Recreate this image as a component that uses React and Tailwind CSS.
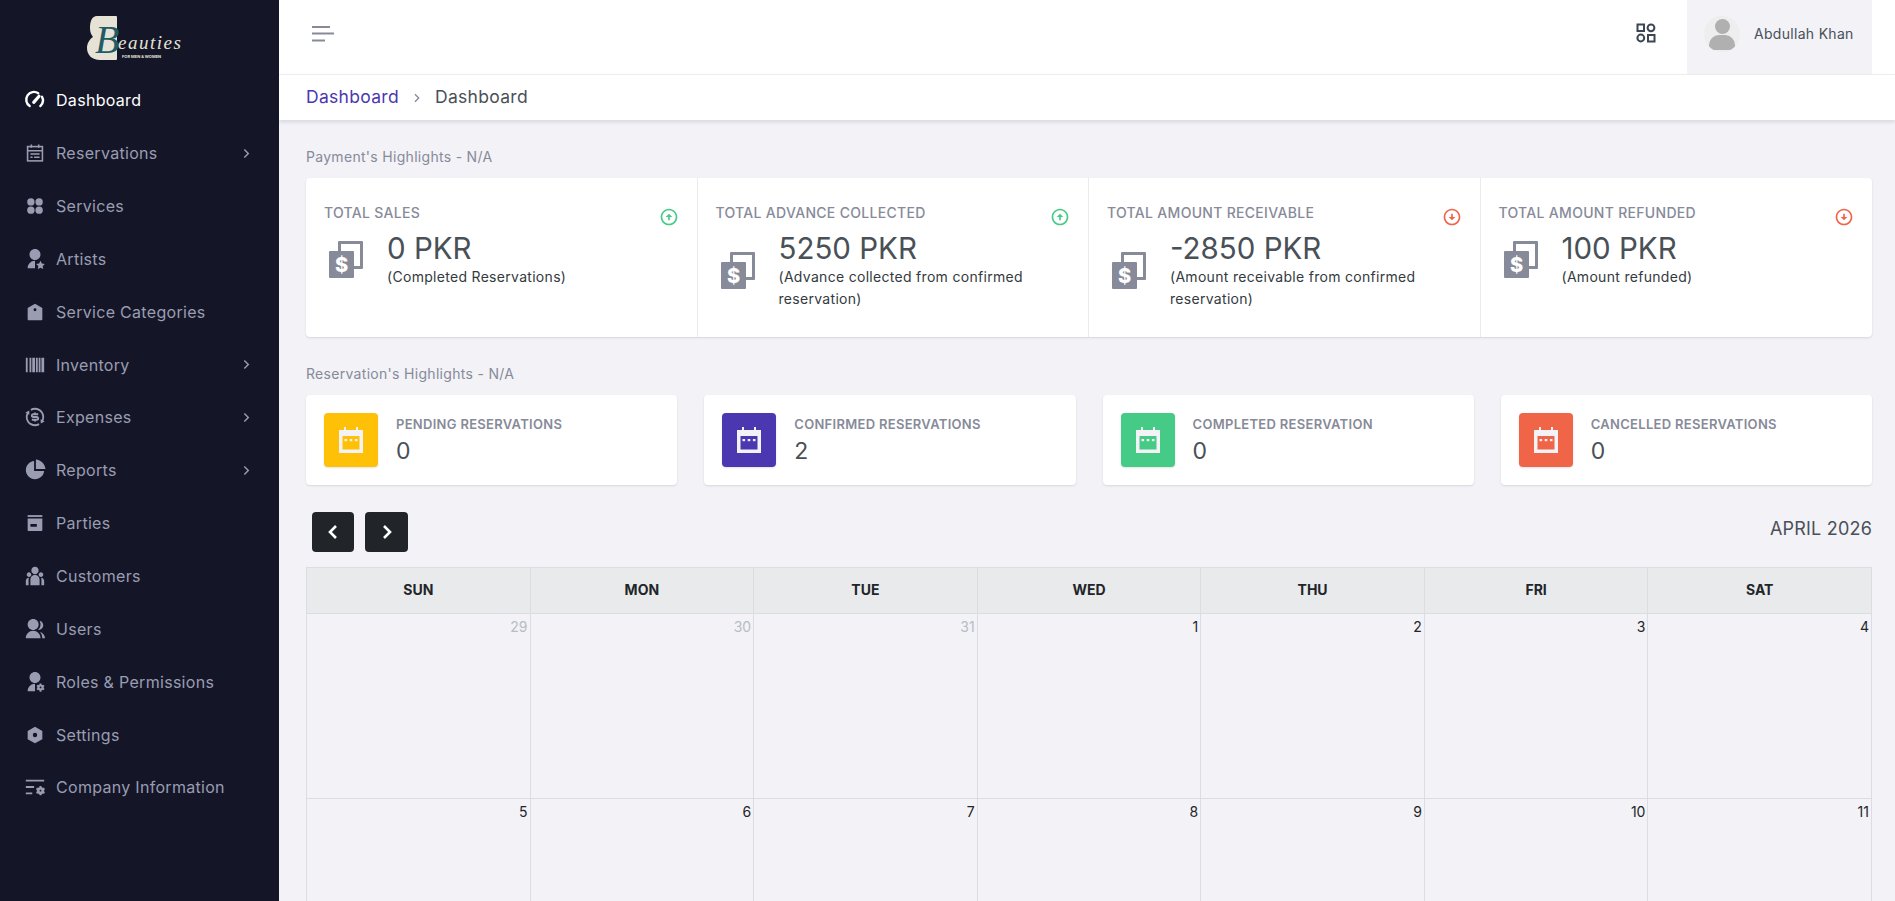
import {
    RiArrowDownCircleLine,
    RiArrowRightSLine,
    RiArrowUpCircleLine,
    RiBarcodeFill,
    RiExchangeDollarLine,
    RiGroupFill,
    RiListSettingsFill,
    RiPieChart2Fill,
    RiTeamFill,
    RiUserSettingsFill,
    RiUserStarFill,
} from 'react-icons/ri';

const FourDots = ({ className }) => (
    <svg viewBox="0 0 24 24" className={className} fill="currentColor">
        <circle cx="7.5" cy="7.5" r="4" />
        <circle cx="16.5" cy="7.5" r="4" />
        <circle cx="7.5" cy="16.5" r="4" />
        <circle cx="16.5" cy="16.5" r="4" />
    </svg>
);

const Gauge = ({ className }) => (
    <svg viewBox="0 0 24 24" className={className} fill="none" stroke="currentColor">
        <path d="M6.2 18.6 A8.4 8.4 0 0 1 15.5 4.6" strokeWidth="2.6" strokeLinecap="round" />
        <path d="M19.6 8.5 A8.4 8.4 0 0 1 17.8 18.6" strokeWidth="2.6" strokeLinecap="round" />
        <path d="M10.6 14.6 L16.4 7.8" strokeWidth="3.4" strokeLinecap="round" />
    </svg>
);

const CalendarLines = ({ className }) => (
    <svg viewBox="0 0 24 24" className={className} fill="none" stroke="currentColor" strokeWidth="1.7">
        <rect x="3.9" y="5" width="16.2" height="15.6" />
        <path d="M4 9.6h16M8 2.8v3.6M16 2.8v3.6" />
        <path d="M7 13h10M7 16.6h2.4M11 16.6h6" />
    </svg>
);

const Tag = ({ className }) => (
    <svg viewBox="0 0 24 24" className={className} fill="currentColor">
        <path fillRule="evenodd" d="M12 3 L20 7.6 V20 a1 1 0 0 1-1 1 H5 a1 1 0 0 1-1-1 V7.6 Z M12 8 a1.6 1.6 0 1 0 0 3.2 a1.6 1.6 0 0 0 0-3.2z" />
    </svg>
);

const Archive = ({ className }) => (
    <svg viewBox="0 0 24 24" className={className} fill="currentColor">
        <rect x="4" y="3.4" width="16" height="2" />
        <path fillRule="evenodd" d="M4 7 H20 V9.6 L20 20 a.8.8 0 0 1-.8.8 H4.8 a.8.8 0 0 1-.8-.8 Z M7 13 v3 h7 v-3 Z" />
    </svg>
);

const Hexagon = ({ className }) => (
    <svg viewBox="0 0 24 24" className={className} fill="currentColor">
        <path fillRule="evenodd" d="M12 3 L20 7.5 V16.5 L12 21 L4 16.5 V7.5 Z M12 9.6 a2.4 2.4 0 1 0 0 4.8 a2.4 2.4 0 0 0 0-4.8z" />
    </svg>
);

const NAV = [
    { label: 'Dashboard', icon: Gauge, active: true },
    { label: 'Reservations', icon: CalendarLines, sub: true },
    { label: 'Services', icon: FourDots },
    { label: 'Artists', icon: RiUserStarFill },
    { label: 'Service Categories', icon: Tag },
    { label: 'Inventory', icon: RiBarcodeFill, sub: true },
    { label: 'Expenses', icon: RiExchangeDollarLine, sub: true },
    { label: 'Reports', icon: RiPieChart2Fill, sub: true },
    { label: 'Parties', icon: Archive },
    { label: 'Customers', icon: RiTeamFill },
    { label: 'Users', icon: RiGroupFill },
    { label: 'Roles & Permissions', icon: RiUserSettingsFill },
    { label: 'Settings', icon: Hexagon },
    { label: 'Company Information', icon: RiListSettingsFill },
];

const PAYMENTS = [
    { title: 'TOTAL SALES', value: '0 PKR', note: '(Completed Reservations)', up: true },
    { title: 'TOTAL ADVANCE COLLECTED', value: '5250 PKR', note: '(Advance collected from confirmed reservation)', up: true },
    { title: 'TOTAL AMOUNT RECEIVABLE', value: '-2850 PKR', note: '(Amount receivable from confirmed reservation)', up: false },
    { title: 'TOTAL AMOUNT REFUNDED', value: '100 PKR', note: '(Amount refunded)', up: false },
];

const RESERVATIONS = [
    { title: 'PENDING RESERVATIONS', value: '0', color: 'bg-[#ffc107]', band: 'text-[#ffc107]' },
    { title: 'CONFIRMED RESERVATIONS', value: '2', color: 'bg-[#4b37b0]', band: 'text-[#4b37b0]' },
    { title: 'COMPLETED RESERVATION', value: '0', color: 'bg-[#45cb85]', band: 'text-[#45cb85]' },
    { title: 'CANCELLED RESERVATIONS', value: '0', color: 'bg-[#f06548]', band: 'text-[#f06548]' },
];

const DAYS = ['SUN', 'MON', 'TUE', 'WED', 'THU', 'FRI', 'SAT'];
const WEEKS = [
    [29, 30, 31, 1, 2, 3, 4],
    [5, 6, 7, 8, 9, 10, 11],
];

// stacked notes with a dollar sign
const MoneyStack = () => (
    <svg viewBox="0 0 34 37" className="w-[34px] h-[37px] shrink-0">
        <rect x="9" y="0" width="25" height="28" rx="1" fill="#878a99" />
        <rect x="12" y="3" width="19" height="22" fill="#ffffff" />
        <rect x="0" y="10" width="25" height="27" rx="1" fill="#878a99" />
        <text x="12.5" y="31" textAnchor="middle" fontSize="20" fontWeight="800" fill="#ffffff" fontFamily="Inter, sans-serif">$</text>
    </svg>
);

const CalendarFill = ({ className }) => (
    <svg viewBox="0 0 24 26" className={`w-[24px] h-[26px] ${className}`}>
        <path d="M0 3h5V0h2v3h10V0h2v3h5v23H0z" fill="#f2f2f7" />
        <rect x="3.5" y="9" width="17" height="13.5" fill="currentColor" />
        <rect x="5.5" y="12" width="2.6" height="2.2" fill="#f2f2f7" />
        <rect x="10.7" y="12" width="2.6" height="2.2" fill="#f2f2f7" />
        <rect x="15.9" y="12" width="2.6" height="2.2" fill="#f2f2f7" />
    </svg>
);

const Logo = () => (
    <svg viewBox="0 0 104 46" className="w-[104px] h-[46px]">
        <path d="M10 1h19a1 1 0 0 1 1 1v42a1 1 0 0 1-1 1H13C5 45 0 40 0 33c0-5 3-9 6-11-2-3-3-5-3-9C3 6 5 1 10 1z" fill="#e6e2d6" />
        <text x="8" y="38" fontSize="40" fontStyle="italic" fill="#1f5c66" fontFamily="'Liberation Serif', serif">B</text>
        <text x="31" y="34" fontSize="19" fontStyle="italic" fill="#e6e2d6" fontFamily="'Liberation Serif', serif" letterSpacing="1.5">eauties</text>
        <text x="35" y="43" fontSize="4" fontWeight="700" fill="#e6e2d6" fontFamily="Inter, sans-serif">FOR MEN &amp; WOMEN</text>
    </svg>
);

function Sidebar() {
    return (
        <aside className="w-[279px] shrink-0 bg-[#141628] h-full">
            <div className="h-[74px] flex items-center justify-center pt-[2px] pr-[2px]">
                <Logo />
            </div>
            <nav>
                {NAV.map((item) => (
                    <div
                        key={item.label}
                        className={`h-[52.85px] flex items-center pl-[24px] pr-[24px] tracking-[0.3px] ${item.active ? 'text-white' : 'text-[#9a9db1]'}`}
                    >
                        <item.icon className="w-[22px] h-[22px] shrink-0" />
                        <span className="ml-[10px] flex-1 text-base">{item.label}</span>
                        {item.sub && <RiArrowRightSLine className="w-[17px] h-[17px]" />}
                    </div>
                ))}
            </nav>
        </aside>
    );
}

function Topbar() {
    return (
        <>
            <header className="h-[75px] shrink-0 bg-white border-b border-[#eff0f3] flex items-center justify-between pl-[33px] pr-[23px]">
                <svg viewBox="0 0 22 16" className="w-[22px] h-[16px] mb-[7px] text-[#878a99]" fill="currentColor">
                    <rect x="0" y="0" width="18" height="2" />
                    <rect x="0" y="6.5" width="22" height="2" />
                    <rect x="0" y="13.5" width="13" height="2" />
                </svg>
                <div className="flex items-center h-full">
                    <svg viewBox="0 0 20 20" fill="none" stroke="#3c4654" strokeWidth="2" className="w-[20px] h-[20px] mr-[31px] mb-[8px]">
                        <rect x="1.5" y="1.5" width="6.5" height="6.5" />
                        <circle cx="15" cy="4.8" r="3.4" />
                        <circle cx="4.8" cy="15" r="3.4" />
                        <rect x="12" y="12" width="6.5" height="6.5" />
                    </svg>
                    <div className="w-[185px] h-full bg-[#f2f2f7] flex items-center pl-[17px] pb-[7px]">
                        <div className="w-[36px] h-[36px] rounded-full bg-[#eeeeee] overflow-hidden flex flex-col items-center">
                            <div className="w-[15px] h-[15px] rounded-full bg-[#b0b0b0] mt-[3px]" />
                            <div className="w-[26px] h-[15px] rounded-t-[10px] rounded-b-[4px] bg-[#b0b0b0] mt-[1px]" />
                        </div>
                        <span className="ml-[14px] text-sm tracking-[0.3px] text-[#495057]">Abdullah Khan</span>
                    </div>
                </div>
            </header>
            <div className="h-[45px] shrink-0 bg-white shadow-[0_2px_4px_rgba(15,34,58,0.12)] flex items-center pl-[27px] text-[17.5px] tracking-[0.3px] relative">
                <span className="text-[#4b37b0]">Dashboard</span>
                <RiArrowRightSLine className="w-[16px] h-[16px] mx-[10px] text-[#878a99]" />
                <span className="text-[#495057]">Dashboard</span>
            </div>
        </>
    );
}

function PaymentCard({ item, last }) {
    const Arrow = item.up ? RiArrowUpCircleLine : RiArrowDownCircleLine;
    return (
        <div className={`pl-[18px] pr-[19px] pt-[25px] ${last ? '' : 'border-r border-[#e9ebec]'}`}>
            <div className="flex items-center justify-between h-[20px]">
                <span className="text-sm font-medium tracking-[0.3px] text-[#878a99]">{item.title}</span>
                <Arrow className={`w-[20px] h-[20px] mt-[8px] -mr-[1px] ${item.up ? 'text-[#45cb85]' : 'text-[#f06548]'}`} />
            </div>
            <div className="flex items-center mt-[7px]">
                <div className="w-[63px] pl-[5px] shrink-0">
                    <MoneyStack />
                </div>
                <div>
                    <div className="text-[29.5px] leading-[36px] text-[#495057]">{item.value}</div>
                    <div className="text-sm leading-[22px] tracking-[0.3px] text-[#343a40]">{item.note}</div>
                </div>
            </div>
        </div>
    );
}

function ReservationCard({ item }) {
    return (
        <div className="h-[90px] bg-white rounded-[4px] shadow-[0_1px_2px_rgba(56,65,74,0.15)] flex items-center pl-[18px]">
            <div className={`w-[54px] h-[54px] rounded-[4px] flex items-center justify-center shadow-[0_1px_2px_rgba(56,65,74,0.15)] ${item.color}`}>
                <CalendarFill className={item.band} />
            </div>
            <div className="ml-[18px]">
                <div className="text-[13px] font-semibold tracking-[0.3px] leading-[20px] text-[#878a99]">{item.title}</div>
                <div className="text-[23px] leading-[32px] mt-[1px] text-[#495057]">{item.value}</div>
            </div>
        </div>
    );
}

function Calendar() {
    return (
        <div className="border-l border-t border-[#dcdde0]">
            <div className="grid grid-cols-7">
                {DAYS.map((d) => (
                    <div key={d} className="h-[46px] pb-[2px] bg-[#e9eaec] border-r border-b border-[#dcdde0] flex items-center justify-center text-sm font-bold text-[#212529]">
                        {d}
                    </div>
                ))}
            </div>
            {WEEKS.map((week, i) => (
                <div key={i} className="grid grid-cols-7">
                    {week.map((n, j) => (
                        <div key={j} className="h-[185px] border-r border-b border-[#dcdde0] pr-[2px] pt-[2px] text-right text-sm leading-[22px]">
                            <span className={i === 0 && j < 3 ? 'text-[#b9bcc4]' : 'text-[#212529]'}>{n}</span>
                        </div>
                    ))}
                </div>
            ))}
        </div>
    );
}

export default function App() {
    return (
        <div className="h-screen w-full flex overflow-hidden bg-[#f2f2f7] font-['Inter',sans-serif]">
            <Sidebar />
            <div className="flex-1 min-w-0 flex flex-col">
                <div className="relative z-10 flex flex-col">
                    <Topbar />
                </div>
                <main className="pl-[27px] pr-[23px] pt-[27px]">
                    <p className="text-sm leading-[20px] tracking-[0.3px] text-[#878a99]">Payment's Highlights - N/A</p>
                    <div className="mt-[11px] h-[159px] grid grid-cols-4 bg-white rounded-[4px] shadow-[0_1px_2px_rgba(56,65,74,0.15)]">
                        {PAYMENTS.map((p, i) => (
                            <PaymentCard key={p.title} item={p} last={i === 3} />
                        ))}
                    </div>
                    <p className="mt-[27px] text-sm leading-[20px] tracking-[0.3px] text-[#878a99]">Reservation's Highlights - N/A</p>
                    <div className="mt-[11px] grid grid-cols-4 gap-[27px]">
                        {RESERVATIONS.map((r) => (
                            <ReservationCard key={r.title} item={r} />
                        ))}
                    </div>
                    <div className="mt-[27px] h-[40px] flex items-center justify-between pl-[6px]">
                        <div className="flex gap-[11px]">
                            <button className="w-[42px] h-[40px] bg-[#212529] rounded-[4px] flex items-center justify-center">
                                <svg viewBox="0 0 12 16" className="w-[12px] h-[16px]" fill="none" stroke="#ffffff" strokeWidth="2.6">
                                    <path d="M9 2 L3 8 L9 14" />
                                </svg>
                            </button>
                            <button className="w-[43px] h-[40px] bg-[#212529] rounded-[4px] flex items-center justify-center">
                                <svg viewBox="0 0 12 16" className="w-[12px] h-[16px]" fill="none" stroke="#ffffff" strokeWidth="2.6">
                                    <path d="M3 2 L9 8 L3 14" />
                                </svg>
                            </button>
                        </div>
                        <span className="text-lg tracking-[0.2px] text-[#495057] -mt-[6px]">APRIL 2026</span>
                    </div>
                    <div className="mt-[15px]">
                        <Calendar />
                    </div>
                </main>
            </div>
        </div>
    );
}
